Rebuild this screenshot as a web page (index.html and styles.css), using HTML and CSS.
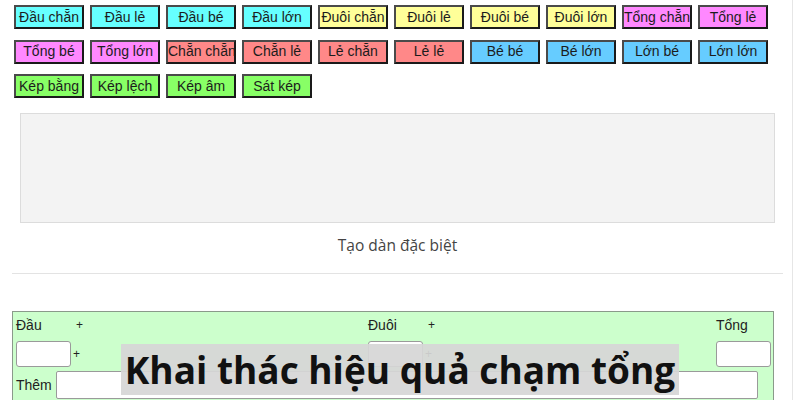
FILE: index.html
```html
<!DOCTYPE html>
<html lang="vi">
<head>
<meta charset="utf-8">
<title>Tạo dàn đặc biệt</title>
<link rel="stylesheet" href="styles.css">
</head>
<body>
<div class="page">
  <div class="btns">
    <button class="b c-cyan">Đầu chẵn</button>
    <button class="b c-cyan">Đầu lẻ</button>
    <button class="b c-cyan">Đầu bé</button>
    <button class="b c-cyan">Đầu lớn</button>
    <button class="b c-yellow">Đuôi chẵn</button>
    <button class="b c-yellow">Đuôi lẻ</button>
    <button class="b c-yellow">Đuôi bé</button>
    <button class="b c-yellow">Đuôi lớn</button>
    <button class="b c-pink">Tổng chẵn</button>
    <button class="b c-pink">Tổng lẻ</button>
    <button class="b c-pink">Tổng bé</button>
    <button class="b c-pink">Tổng lớn</button>
    <button class="b c-red">Chẵn chẵn</button>
    <button class="b c-red">Chẵn lẻ</button>
    <button class="b c-red">Lẻ chẵn</button>
    <button class="b c-red">Lẻ lẻ</button>
    <button class="b c-blue">Bé bé</button>
    <button class="b c-blue">Bé lớn</button>
    <button class="b c-blue">Lớn bé</button>
    <button class="b c-blue">Lớn lớn</button>
    <button class="b c-green">Kép bằng</button>
    <button class="b c-green">Kép lệch</button>
    <button class="b c-green">Kép âm</button>
    <button class="b c-green">Sát kép</button>
  </div>

  <div class="result"></div>
  <div class="caption">Tạo dàn đặc biệt</div>
  <div class="rule"></div>

  <div class="panel">
    <div class="grid">
      <div class="grp">
        <div class="lbl"><span class="name">Đầu</span><span class="plus">+</span></div>
        <div class="inrow"><input class="box" type="text"><span class="plus2">+</span></div>
      </div>
      <div class="grp">
        <div class="lbl"><span class="name">Đuôi</span><span class="plus">+</span></div>
        <div class="inrow"><input class="box" type="text"><span class="plus2">+</span></div>
      </div>
      <div class="grp">
        <div class="lbl"><span class="name">Tổng</span></div>
        <div class="inrow"><input class="box" type="text"></div>
      </div>
    </div>
    <div class="them"><span class="tlabel">Thêm</span><input class="wide" type="text"></div>
  </div>

  <div class="banner">Khai thác hiệu quả chạm tổng</div>
</div>
</body>
</html>
```

FILE: styles.css
```css
html, body {
  margin: 0;
  padding: 0;
  background: #fff;
}
.page {
  position: relative;
  width: 792px;
  height: 400px;
  overflow: hidden;
  border-right: 1px solid #e6e6e6;
  font-family: "Liberation Sans", Arial, sans-serif;
  font-size: 14px;
  color: #222;
}
.btns {
  display: flex;
  flex-wrap: wrap;
  column-gap: 6px;
  row-gap: 10.5px;
  padding: 5px 0 0 14px;
  width: 760px;
}
.b {
  display: block;
  width: 70px;
  height: 24px;
  padding: 0;
  margin: 0;
  border: 2px solid;
  border-color: #4a4a4a #1a1a1a #1a1a1a #4a4a4a;
  font-family: "Liberation Sans", Arial, sans-serif;
  font-size: 14px;
  color: #1c1c1c;
  text-align: center;
  white-space: nowrap;
  overflow: hidden;
  line-height: 19px;
}
.c-cyan { background: #66ffff; }
.c-yellow { background: #ffff99; }
.c-pink { background: #ff88ff; }
.c-red { background: #ff8888; }
.c-blue { background: #66ccff; }
.c-green { background: #88ff66; }

.result {
  margin: 15px 0 0 20px;
  width: 753px;
  height: 108px;
  background: #f3f3f3;
  border: 1px solid #dcdcdc;
}
.caption {
  margin: 11px 0 0 12px;
  width: 771px;
  text-align: center;
  font-family: "Open Sans", sans-serif;
  font-size: 15.5px;
  color: #444;
  line-height: 22px;
}
.rule {
  margin: 17px 0 0 12px;
  width: 771px;
  height: 1px;
  background: #e3e3e3;
}
.panel {
  margin: 37px 0 0 12px;
  width: 762px;
  height: 100px;
  background: #ccffcc;
  border: 1px solid #8a9a8a;
  padding: 4px 2px 0 2px;
  box-sizing: border-box;
}
.grid {
  display: grid;
  grid-template-columns: 352px 1fr 56px;
}
.lbl {
  display: flex;
  height: 18px;
  line-height: 18px;
}
.name {
  width: 60px;
  padding-left: 1px;
}
.inrow {
  display: flex;
  align-items: center;
  margin-top: 7px;
}
.plus2 {
  margin-left: 2px;
  font-size: 12px;
}
.plus {
  font-size: 12px;
}
.box {
  width: 55px;
  height: 26px;
  box-sizing: border-box;
  margin: 0 0 0 1px;
  border: 1px solid #9a9a9a;
  border-radius: 3px;
  background: #fff;
  padding: 0;
}
.them {
  display: flex;
  align-items: center;
  margin-top: 4px;
}
.tlabel {
  width: 40px;
  padding-left: 1px;
}
.wide {
  width: 702px;
  height: 28px;
  box-sizing: border-box;
  margin: 0;
  border: 1px solid #9a9a9a;
  border-radius: 2px;
  background: #fff;
  padding: 0;
}
.banner {
  position: absolute;
  left: 121px;
  top: 344px;
  width: 558px;
  height: 51px;
  background: rgba(214, 214, 214, 0.93);
  font-family: "Open Sans", sans-serif;
  font-weight: 700;
  font-size: 37px;
  line-height: 52px;
  color: #111;
  text-align: center;
  white-space: nowrap;
}
```
